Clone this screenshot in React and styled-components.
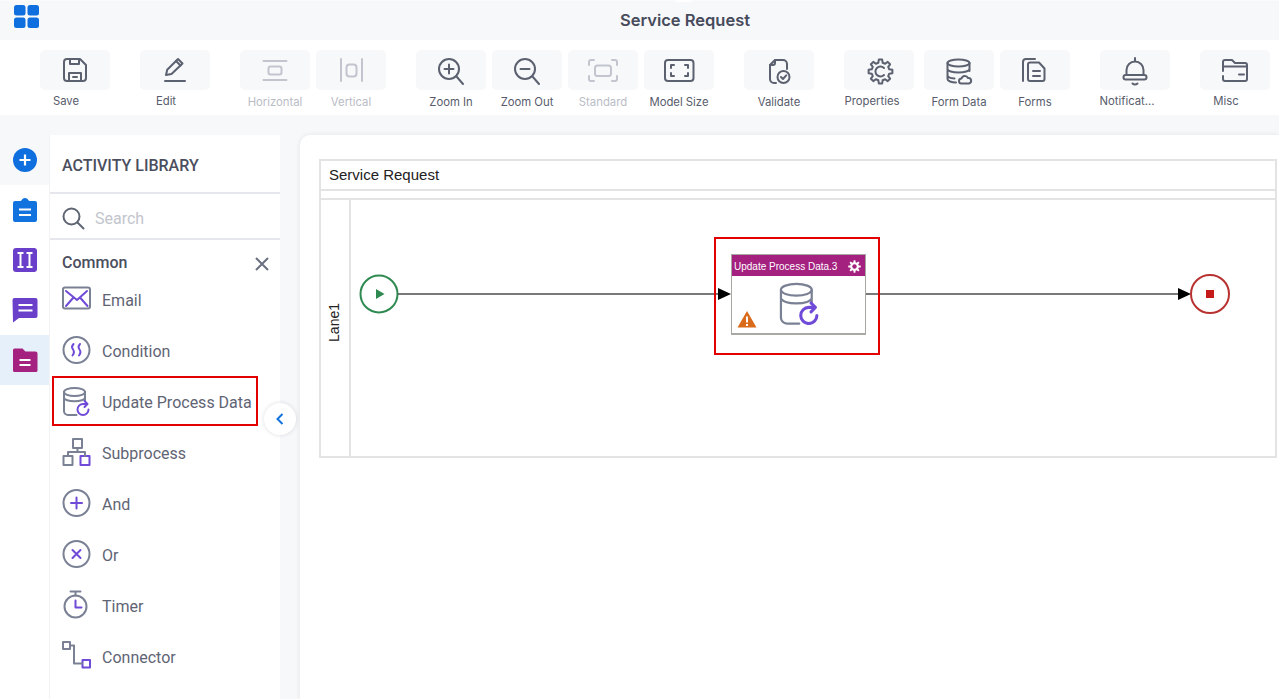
import React from 'react';
import styled, { createGlobalStyle } from 'styled-components';

const Global = createGlobalStyle`
  html, body { margin: 0; padding: 0; background: #f7f8fa; overflow: hidden; }
  * { box-sizing: border-box; }
`;

const Page = styled.div`
  width: 1279px; height: 699px; display: flex; flex-direction: column;
  background: #f7f8fa; overflow: hidden; position: relative;
  font-family: Inter, "Noto Sans", sans-serif;
`;
const Header = styled.header`
  height: 40px; display: flex; align-items: flex-start; padding-left: 14px; flex: none;
  border-top: 1px solid #fbfbfc;
`;
const Logo = styled.svg` width: 25px; height: 23px; margin-top: 4px; flex: none; `;
const Title = styled.h1`
  flex: 1; margin: 0; padding-left: 52px; text-align: center;
  font: 600 16.5px/38px Inter, sans-serif; color: #474b5c;
`;
const Notch = styled.div`
  position: absolute; left: 675px; top: 0; width: 17px; height: 2px; background: #fff; border-radius: 0 0 8px 8px;
`;
const Toolbar = styled.div`
  height: 75px; flex: none; background: #fff; display: flex; padding: 10px 0 0 40px;
`;
const ToolGroup = styled.div`
  display: flex; gap: 6px; margin-right: ${p => p.$after ?? 30}px;
`;
const Tool = styled.div` width: 70px; display: flex; flex-direction: column; align-items: center; `;
const ToolBox = styled.div`
  width: 70px; height: 40px; background: #f7f8fa; border-radius: 5px;
  display: flex; align-items: center; justify-content: center;
  color: ${p => p.$off ? '#c2c5cd' : '#5c6170'};
`;
const ToolIcon = styled.svg`
  width: 32px; height: 32px; fill: none; stroke: currentColor; stroke-width: 2;
  stroke-linecap: round; stroke-linejoin: round;
`;
const SearchGlyph = styled(ToolIcon)` width: 24px; height: 24px; `;
const ToolLabel = styled.span`
  font-size: 11.3px; line-height: 15px; white-space: nowrap;
  margin-top: ${p => p.$shift ? 4 : 5}px; padding-right: ${p => p.$shift || 0}px;
  color: ${p => p.$off ? '#b9bcc5' : '#575b6b'};
`;
const Main = styled.main` flex: 1; display: flex; margin-top: 20px; min-height: 0; `;
const Rail = styled.nav`
  width: 50px; flex: none; background: #fff; display: flex; flex-direction: column;
  border-right: 1px solid #f2f3f5; height: 100%;
`;
const RailItem = styled.div`
  height: 50px; display: flex; align-items: center; justify-content: center; padding-left: 1px;
  background: ${p => p.$bg || 'transparent'};
`;
const RailIcon = styled.svg` width: 26px; height: 26px; `;
const Panel = styled.aside`
  width: 230px; flex: none; background: #fff; position: relative; display: flex; flex-direction: column;
`;
const PanelTitle = styled.div`
  height: 59px; flex: none; padding: 21px 0 0 12px; border-bottom: 2px solid #e6e7ec;
  font: 500 16px/20px Roboto, sans-serif; color: #4b4e5e;
`;
const SearchRow = styled.div`
  height: 46px; flex: none; display: flex; align-items: center; gap: 10px; padding: 4px 0 0 11px;
  border-bottom: 2px solid #e6e7ec; color: #5f6573;
`;
const SearchInput = styled.input`
  border: 0; outline: 0; background: transparent; width: 150px; padding: 0;
  font: 400 16px Roboto, sans-serif;
  &::placeholder { color: #c2c5cd; opacity: 1; }
`;
const GroupHead = styled.div`
  height: 34px; flex: none; display: flex; align-items: center; justify-content: space-between;
  padding: 11px 11px 0 12px; font: 500 16px Roboto, sans-serif; color: #4b4e5e;
`;
const CloseIcon = styled.svg`
  width: 14px; height: 14px; fill: none; stroke: #6b7080; stroke-width: 2; margin-top: 3px;
`;
const List = styled.div` display: flex; flex-direction: column; gap: 1px; padding-left: 2px; `;
const Row = styled.div`
  width: 206px; height: 50px; display: flex; align-items: center; gap: 10px; padding-left: 8px;
  border: 2px solid ${p => p.$marked ? '#e30000' : 'transparent'};
  font: 400 16px Roboto, sans-serif; color: #5f6475; white-space: nowrap;
  span { padding-top: 2px; }
`;
const RowIcon = styled.svg`
  width: 30px; height: 30px; flex: none; fill: none; stroke: #7a8194; stroke-width: 2;
  stroke-linecap: round; stroke-linejoin: round;
  .accent { stroke: #6f4bd8; }
`;
const Collapse = styled.button`
  position: absolute; left: 214px; top: 268px; width: 32px; height: 32px; border-radius: 50%;
  background: #fff; border: 0; padding: 0; display: flex; align-items: center; justify-content: center;
  box-shadow: 0 0 4px rgba(40,50,70,.16);
`;
const Chevron = styled.svg` width: 14px; height: 14px; fill: none; stroke: #1273de; stroke-width: 2; `;
const Canvas = styled.section`
  flex: 1; margin-left: 20px; background: #fff; border-radius: 10px 0 0 0;
  padding: 24px 0 0 19px; box-shadow: 0 0 5px rgba(40,50,70,.1);
`;
const Pool = styled.div`
  width: 958px; height: 299px; border: 2px solid #e3e3e3; display: flex; flex-direction: column;
`;
const PoolTitle = styled.div`
  height: 30px; flex: none; padding-left: 8px; border-bottom: 2px solid #e3e3e3;
  font: 400 15px/27px "Liberation Sans", Arial, sans-serif; color: #222;
`;
const PoolStrip = styled.div` height: 9px; flex: none; border-bottom: 2px solid #e3e3e3; `;
const Lane = styled.div` flex: 1; display: flex; `;
const LaneLabel = styled.div`
  width: 30px; flex: none; border-right: 2px solid #e3e3e3; display: flex; align-items: center; justify-content: center;
  font: 400 14px "Liberation Sans", Arial, sans-serif; color: #222;
  writing-mode: vertical-rl;
  span { transform: rotate(180deg); margin-bottom: 12px; margin-left: -2px; }
`;
const LaneBody = styled.div` flex: 1; position: relative; `;
const Wires = styled.svg` position: absolute; left: 0; top: 0; width: 925px; height: 256px; `;
const Highlight = styled.div`
  position: absolute; left: 363px; top: 37px; width: 166px; height: 118px; border: 2px solid #e30000;
`;
const Node = styled.div`
  position: absolute; left: 380px; top: 54px; width: 135px; height: 81px; background: #fff;
  border: 1px solid #a9a9a4; border-bottom-width: 2px; display: flex; flex-direction: column;
`;
const NodeHead = styled.div`
  height: 21px; flex: none; background: #a4217f; color: #fff; display: flex; align-items: center;
  justify-content: space-between; padding: 1px 4px 0 2px;
  font: 400 10px "Liberation Sans", Arial, sans-serif; white-space: nowrap;
`;
const NodeBody = styled.div` flex: 1; position: relative; `;
const NodeDb = styled.svg`
  position: absolute; left: 46px; top: 5px; width: 44px; height: 44px; fill: none; stroke: #7a8194;
  stroke-width: 1.500; stroke-linecap: round; stroke-linejoin: round; .accent { stroke: #6f4bd8; stroke-width: 2.100; }
`;
const NodeWarn = styled.svg` position: absolute; left: 5px; top: 35px; width: 20px; height: 17px; `;
const NodeGear = styled.svg` width: 13px; height: 13px; `;

function gear(cx, cy, ro, ri, n) {
  let d = '';
  for (let i = 0; i < n; i++) {
    const a = (i / n) * Math.PI * 2, s = Math.PI / n;
    const pts = [[ri, a - s * .62], [ro, a - s * .36], [ro, a + s * .36], [ri, a + s * .62]];
    pts.forEach(([r, t], k) => {
      const x = (cx + r * Math.cos(t)).toFixed(2), y = (cy + r * Math.sin(t)).toFixed(2);
      d += (i === 0 && k === 0 ? 'M' : 'L') + x + ' ' + y;
    });
  }
  return d + 'z';
}

const toolIcons = {
  save: <><path d="M8 5h13l6 6v13a3 3 0 0 1-3 3H8a3 3 0 0 1-3-3V8a3 3 0 0 1 3-3z"/><path d="M11 5v5h9V5M10 27v-8h12v8M14 23h4"/></>,
  edit: <><path d="M6 27h20"/><path d="M7 21l1.200-5.200L19 5l4.500 4.500L12.500 20z"/><path d="M17 7l4.500 4.500"/></>,
  horizontal: <><path d="M4.500 7h23M4.500 26h23"/><rect x="9.500" y="12.500" width="13" height="8" rx="2"/></>,
  vertical: <><path d="M6 5v22M27 5v22"/><rect x="11.500" y="10.500" width="10" height="12" rx="3"/></>,
  zoomIn: <><circle cx="14" cy="15" r="10"/><path d="M21.500 22.500L28 30M14 10.500v9M9.500 15h9"/></>,
  zoomOut: <><circle cx="14" cy="15" r="10"/><path d="M21.500 22.500L28 30M9.500 15h9"/></>,
  standard: <><path d="M2 11V8a2 2 0 0 1 2-2h3M25 6h3a2 2 0 0 1 2 2v3M30 22v3a2 2 0 0 1-2 2h-3M7 27H4a2 2 0 0 1-2-2v-3"/><rect x="8" y="11.500" width="16" height="10.500" rx="2.500"/></>,
  model: <><rect x="2" y="6" width="28.500" height="21" rx="3"/><path d="M8 14v-3h3M22 11h3v3M25 19v3h-3M11 22H8v-3"/></>,
  validate: <><path d="M13 29h-2a4 4 0 0 1-4-4V11l5-5h8a4 4 0 0 1 4 4v5"/><path d="M7 11h3a2 2 0 0 0 2-2V6"/><circle cx="20.500" cy="23" r="6"/><path d="M18 23l2 2 3.200-3.600"/></>,
  props: <><path d={gear(17.5, 17.5, 12, 9, 8)}/><path d="M21 14a5 5 0 1 0 0 7"/></>,
  formData: <><ellipse cx="15.500" cy="9" rx="11" ry="3.500"/><path d="M4.500 9v16c0 2 4 3.500 8.500 3.500M26.500 9v8M4.500 15c0 2 5 3.500 11 3.500s11-1.500 11-3.500M4.500 21c0 2 3 3.200 7 3.500"/><path d="M18.500 29.500a2.500 2.500 0 0 1 0-5 3.500 3.500 0 0 1 6.500-.5 2.800 2.800 0 0 1 1 5.500z"/></>,
  forms: <><path d="M4 27V8a3 3 0 0 1 3-3h9"/><path d="M11 8.500h9l5.500 6V25a2 2 0 0 1-2 2H11a2 2 0 0 1-2-2V10.500a2 2 0 0 1 2-2z"/><path d="M14 17h7M14 22h7"/></>,
  bell: <><path d="M16 4v3M7.500 21v-5a8.500 8.500 0 0 1 17 0v5"/><rect x="4.500" y="21" width="23" height="4.500" rx="2.200"/><path d="M13.500 29.500a3.500 3.500 0 0 0 5 0"/></>,
  misc: <><path d="M4 17V8a2 2 0 0 1 2-2h7l3 3h10a2 2 0 0 1 2 2v14a2 2 0 0 1-2 2H6a2 2 0 0 1-2-2v-3"/><path d="M4 12.500h24M20 20.500h5"/></>,
};

const toolGroups = [
  { items: [{ icon: 'save', label: 'Save', shift: 18 }] },
  { items: [{ icon: 'edit', label: 'Edit', shift: 18 }] },
  { items: [{ icon: 'horizontal', label: 'Horizontal', off: true }, { icon: 'vertical', label: 'Vertical', off: true }] },
  { items: [{ icon: 'zoomIn', label: 'Zoom In' }, { icon: 'zoomOut', label: 'Zoom Out' }, { icon: 'standard', label: 'Standard', off: true }, { icon: 'model', label: 'Model Size' }] },
  { items: [{ icon: 'validate', label: 'Validate' }] },
  { after: 10, items: [{ icon: 'props', label: 'Properties', shift: 14 }] },
  { items: [{ icon: 'formData', label: 'Form Data' }, { icon: 'forms', label: 'Forms' }] },
  { items: [{ icon: 'bell', label: 'Notificat...', shift: 16 }] },
  { items: [{ icon: 'misc', label: 'Misc', shift: 18 }] },
];

const dbIcon = (
  <>
    <ellipse cx="12.500" cy="6" rx="10.500" ry="4"/>
    <path d="M2 6v19a4 4 0 0 0 4 4h8.500M23 6v9M2 11.500c0 2.300 5 3.800 10.500 3.800s10.500-1.500 10.500-3.800"/>
    <path className="accent" d="M26.500 23.500a5.500 5.500 0 1 1-5.500-5.500h3"/>
    <path className="accent" d="M22.500 15l3 3-3 3"/>
  </>
);

const rows = [
  { label: 'Email', icon: <><rect x="1" y="3.500" width="27" height="21" rx="2"/><path className="accent" d="M4 7l11 9 10-9M4 22l7.500-8.500M25.500 22L18 13.500"/></> },
  { label: 'Condition', icon: <><circle cx="14.500" cy="15" r="13"/><path className="accent" d="M11.500 9c-2 2-2 3.500-.500 5.500s1.500 3.500-.500 6M18 9c-2 2-2 3.500-.500 5.500s1.500 3.500-.500 6"/></> },
  { label: 'Update Process Data', marked: true, icon: dbIcon },
  { label: 'Subprocess', icon: <><rect x="11" y="2" width="9" height="9"/><rect x="1.500" y="19" width="9" height="9"/><rect className="accent" x="18.500" y="19" width="9" height="9"/><path d="M15.500 11v4M6 19v-4h17v4"/></> },
  { label: 'And', icon: <><circle cx="14.500" cy="15" r="13"/><path className="accent" d="M14.500 9.500v11M9 15h11"/></> },
  { label: 'Or', icon: <><circle cx="14.500" cy="15" r="13"/><path className="accent" d="M10.500 11l8 8M18.500 11l-8 8"/></> },
  { label: 'Timer', icon: <><circle cx="13.500" cy="16.500" r="11"/><path d="M8.500 1.500h10M13.500 1.500v4"/><path className="accent" d="M13.500 10.500v7h6"/></> },
  { label: 'Connector', icon: <><rect x="1" y="1" width="7" height="7"/><rect className="accent" x="20.500" y="19" width="7.500" height="7.500"/><path d="M8 4.500h4v18h8"/></> },
];

export default function App() {
  return (
    <Page>
      <Global />
      <Notch />
      <Header>
        <Logo viewBox="0 0 25 23" aria-label="Apps">
          <g fill="#0f6fde">
            <rect x="0" y="0" width="11.500" height="10.500" rx="2.500"/>
            <rect x="13.500" y="0" width="11.500" height="10.500" rx="2.500"/>
            <rect x="0" y="12.500" width="11.500" height="10.500" rx="2.500"/>
            <rect x="13.500" y="12.500" width="11.500" height="10.500" rx="2.500"/>
          </g>
        </Logo>
        <Title>Service Request</Title>
      </Header>
      <Toolbar>
        {toolGroups.map((g, i) => (
          <ToolGroup key={i} $after={g.after}>
            {g.items.map(t => (
              <Tool key={t.label}>
                <ToolBox $off={t.off}>
                  <ToolIcon viewBox="0 0 32 32">{toolIcons[t.icon]}</ToolIcon>
                </ToolBox>
                <ToolLabel $off={t.off} $shift={t.shift}>{t.label}</ToolLabel>
              </Tool>
            ))}
          </ToolGroup>
        ))}
      </Toolbar>
      <Main>
        <Rail>
          <RailItem $bg="#f7f8fa">
            <RailIcon viewBox="0 0 26 26"><circle cx="13" cy="13" r="12" fill="#0f6fde"/><path d="M13 7.500v11M7.500 13h11" stroke="#fff" strokeWidth="2.200"/></RailIcon>
          </RailItem>
          <RailItem>
            <RailIcon viewBox="0 0 26 26"><path fill="#1273de" d="M3 4h5.500c.5 0 .8-.3 1-.7C10 2 11.300 1 13 1s3 1 3.500 2.300c.2.400.5.700 1 .7H23a2 2 0 0 1 2 2v17a2 2 0 0 1-2 2H3a2 2 0 0 1-2-2V6a2 2 0 0 1 2-2z"/><path d="M7 12.500h12M7 18h12" stroke="#fff" strokeWidth="2"/></RailIcon>
          </RailItem>
          <RailItem>
            <RailIcon viewBox="0 0 26 26"><rect x="1" y="1" width="24" height="24" rx="3" fill="#6a3fc9"/><path d="M5.500 6h6M5.500 20h6M8.500 6v14M14.500 6h6M14.500 20h6M17.500 6v14" stroke="#fff" strokeWidth="2"/></RailIcon>
          </RailItem>
          <RailItem>
            <RailIcon viewBox="0 0 26 26"><path fill="#6a3fc9" d="M2.500 1h21A2 2 0 0 1 25.500 3v16a2 2 0 0 1-2 2H7l-6 4.500L.500 3a2 2 0 0 1 2-2z"/><path d="M6.500 8h14M6.500 13.500h14" stroke="#fff" strokeWidth="2"/></RailIcon>
          </RailItem>
          <RailItem $bg="#e6f0fa">
            <RailIcon viewBox="0 0 26 26"><path fill="#a4217f" d="M2.500 1.500h8l3 3h10a2 2 0 0 1 2 2v17a1.500 1.500 0 0 1-1.500 1.500H2.500A1.500 1.500 0 0 1 1 23.500V3a1.500 1.500 0 0 1 1.500-1.500z"/><path d="M7.500 13h11M7.500 18h11" stroke="#fff" strokeWidth="2"/></RailIcon>
          </RailItem>
        </Rail>
        <Panel>
          <PanelTitle>ACTIVITY LIBRARY</PanelTitle>
          <SearchRow>
            <SearchGlyph viewBox="0 0 24 24">
              <circle cx="10.500" cy="10.500" r="8"/><path d="M16.500 16.500l6 6"/>
            </SearchGlyph>
            <SearchInput placeholder="Search" />
          </SearchRow>
          <GroupHead>
            Common
            <CloseIcon viewBox="0 0 14 14"><path d="M1 1l12 12M13 1L1 13"/></CloseIcon>
          </GroupHead>
          <List>
            {rows.map(r => (
              <Row key={r.label} $marked={r.marked}>
                <RowIcon viewBox="0 0 30 30">{r.icon}</RowIcon>
                <span>{r.label}</span>
              </Row>
            ))}
          </List>
          <Collapse aria-label="Collapse">
            <Chevron viewBox="0 0 14 14"><path d="M9.500 2L4.500 7l5 5"/></Chevron>
          </Collapse>
        </Panel>
        <Canvas>
          <Pool>
            <PoolTitle>Service Request</PoolTitle>
            <PoolStrip />
            <Lane>
              <LaneLabel><span>Lane1</span></LaneLabel>
              <LaneBody>
                <Wires viewBox="0 0 925 256">
                  <circle cx="28" cy="94" r="18.500" fill="#fff" stroke="#2f8a52" strokeWidth="2"/>
                  <path d="M25 89v10l8.500-5z" fill="#2f8a52"/>
                  <path d="M47 94h322M515 94h315" stroke="#4d4d4d" strokeWidth="1.500"/>
                  <path d="M367 88l13 6-13 6zM827 88l13 6-13 6z" fill="#000"/>
                  <circle cx="859" cy="94" r="19" fill="#fff" stroke="#b83232" strokeWidth="2"/>
                  <rect x="855" y="90" width="8" height="8" fill="#c41a1a"/>
                </Wires>
                <Highlight />
                <Node>
                  <NodeHead>
                    Update Process Data.3
                    <NodeGear viewBox="0 0 13 13">
                      <path d={gear(6.5, 6.5, 6.3, 4.4, 8)} fill="#fff"/>
                      <circle cx="6.500" cy="6.500" r="2.200" fill="#a4217f"/>
                    </NodeGear>
                  </NodeHead>
                  <NodeBody>
                    <NodeDb viewBox="0 0 30 30">{dbIcon}</NodeDb>
                    <NodeWarn viewBox="0 0 20 17">
                      <path d="M10 0l9.500 16.500H.500z" fill="#d96b1a"/>
                      <path d="M10 5.500v6M10 13v2" stroke="#fff" strokeWidth="2"/>
                    </NodeWarn>
                  </NodeBody>
                </Node>
              </LaneBody>
            </Lane>
          </Pool>
        </Canvas>
      </Main>
    </Page>
  );
}
